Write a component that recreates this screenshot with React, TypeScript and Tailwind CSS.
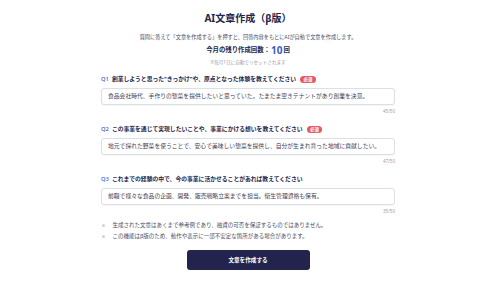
import React from 'react';

interface Question {
    no: string;
    label: string;
    required: boolean;
    answer: string;
    count: string;
}

const questions: Question[] = [
    {
        no: 'Q1',
        label: '創業しようと思った"きっかけ"や、原点となった体験を教えてください',
        required: true,
        answer: '食品会社時代、手作りの惣菜を提供したいと思っていた。たまたま空きテナントがあり創業を決意。',
        count: '45/50',
    },
    {
        no: 'Q2',
        label: 'この事業を通じて実現したいことや、事業にかける想いを教えてください',
        required: true,
        answer: '地元で採れた野菜を使うことで、安心で美味しい惣菜を提供し、自分が生まれ育った地域に貢献したい。',
        count: '47/50',
    },
    {
        no: 'Q3',
        label: 'これまでの経験の中で、今の事業に活かせることがあれば教えてください',
        required: false,
        answer: '前職で様々な食品の企画、開発、販売戦略立案までを担当。衛生管理資格も保有。',
        count: '35/50',
    },
];

const notes = [
    '生成された文章はあくまで参考例であり、融資の可否を保証するものではありません。',
    'この機能はβ版のため、動作や表示に一部不安定な箇所がある場合があります。',
];

export default function App() {
    return (
        <div className="min-h-[281px] w-[500px] bg-white font-['Noto_Sans','Noto_Sans_CJK_JP',sans-serif] text-[#23264a]">
            <div className="ml-[101px] w-[294px] pt-[11px]">
                {/* Header */}
                <h1 className="text-center text-[10px] font-bold leading-[14px] text-[#23264a]">AI文章作成（β版）</h1>
                <p className="mt-[8px] text-center text-[5.2px] leading-[8px] text-[#4a4d63]">
                    質問に答えて「文章を作成する」を押すと、回答内容をもとにAIが自動で文章を作成します。
                </p>
                <p className="mt-[3px] flex items-center justify-center text-[6.4px] font-bold leading-[12px] text-[#23264a]">
                    今月の残り作成回数：
                    <span className="mx-[1px] text-[10px] font-bold text-[#3a5bc7]">10</span>回
                </p>
                <p className="mt-[3px] text-center text-[4.6px] leading-[6px] text-[#9a9cab]">※毎月1日に自動でリセットされます</p>

                {/* Questions */}
                <div className="mt-[10px] flex flex-col gap-[11px]">
                    {questions.map((q) => (
                        <div key={q.no}>
                            <div className="flex items-center text-[5.8px] font-bold leading-[8px]">
                                <span className="mr-[3px] font-medium text-[#3a5bc7]">{q.no}</span>
                                <span>{q.label}</span>
                                {q.required && (
                                    <span className="ml-[4px] rounded-full bg-[#e35a64] px-[3.5px] text-[4.4px] leading-[7px] font-bold text-white">
                                        必須
                                    </span>
                                )}
                            </div>
                            <div className="mt-[5px] flex h-[17px] items-center rounded-[3px] border border-[#dcdfe6] bg-white px-[6px] text-[5.8px] text-[#3f4257] shadow-[0_0.5px_1px_rgba(0,0,0,0.04)]">
                                {q.answer}
                            </div>
                            <div className="mt-[3px] text-right text-[4.5px] leading-[6px] text-[#9a9cab]">{q.count}</div>
                        </div>
                    ))}
                </div>

                {/* Notes */}
                <ul className="mt-[6px] text-[5.5px] leading-[11px] text-[#4a4d63]">
                    {notes.map((n) => (
                        <li key={n} className="flex items-center">
                            <span className="ml-[1px] mr-[8px] h-[2.5px] w-[2.5px] rounded-full bg-[#cfd1da]" />
                            {n}
                        </li>
                    ))}
                </ul>

                {/* Action */}
                <div className="mt-[8px] flex justify-center">
                    <button className="h-[20px] w-[123px] rounded-[3px] bg-[#23244d] text-[5.6px] font-bold text-white">
                        文章を作成する
                    </button>
                </div>
            </div>
        </div>
    );
}
